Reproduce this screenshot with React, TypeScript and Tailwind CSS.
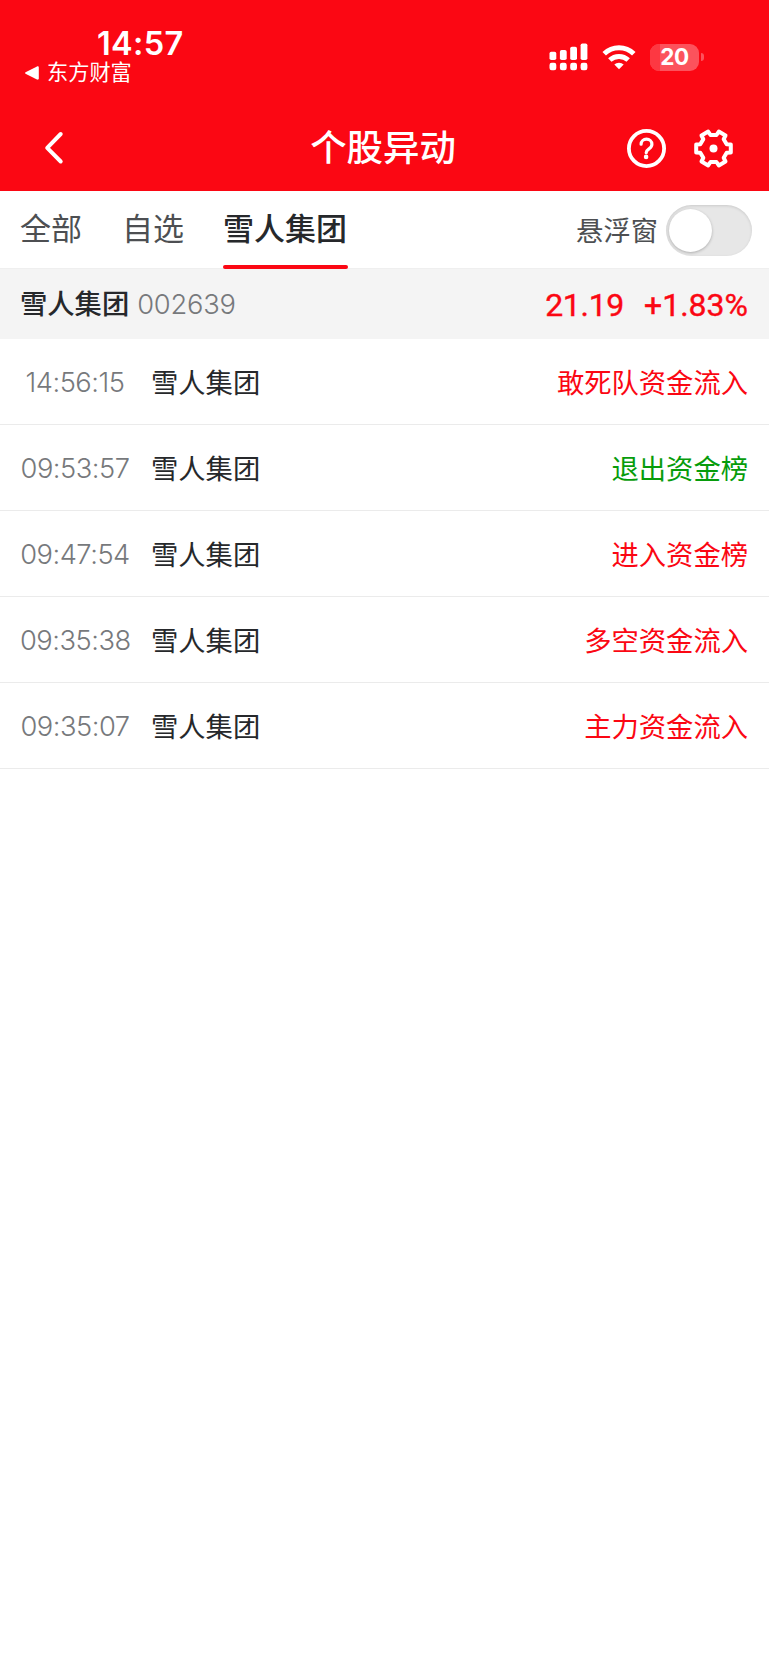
type Tone = "up" | "down";

type Movement = {
  time: string;
  name: string;
  event: string;
  tone: Tone;
};

const movements: Movement[] = [
  { time: "14:56:15", name: "雪人集团", event: "敢死队资金流入", tone: "up" },
  { time: "09:53:57", name: "雪人集团", event: "退出资金榜", tone: "down" },
  { time: "09:47:54", name: "雪人集团", event: "进入资金榜", tone: "up" },
  { time: "09:35:38", name: "雪人集团", event: "多空资金流入", tone: "up" },
  { time: "09:35:07", name: "雪人集团", event: "主力资金流入", tone: "up" },
];

const toneClass: Record<Tone, string> = {
  up: "text-[#fb0713]",
  down: "text-[#079c0b]",
};

export default function App() {
  return (
    <div className="flex min-h-[1665px] w-[769px] flex-col bg-white font-['Noto_Sans_CJK_SC',sans-serif]">
      <header className="h-[191px] bg-[#fb0713] text-white">
        <StatusBar />
        <NavBar />
      </header>
      <Tabs />
      <StockSummary />
      <ul>
        {movements.map((m) => (
          <MovementRow key={m.time} movement={m} />
        ))}
      </ul>
    </div>
  );
}

function StatusBar() {
  return (
    <div className="flex h-[106px] justify-between pt-[26px] pr-[65px] pl-[25px]">
      <div>
        <p className="pl-[72px] font-['Inter',sans-serif] text-[32.5px] leading-[35px] font-semibold tracking-[0.3px]">
          14:57
        </p>
        <div className="flex items-center">
          <svg width="14" height="14" viewBox="0 0 14 14" fill="currentColor">
            <path d="M1 5.9 12 .5c1-.4 1.8 0 1.8 1v11c0 1-.8 1.4-1.8 1L1 8.1C-.3 7.5-.3 6.5 1 5.9Z" />
          </svg>
          <span className="pb-[3px] pl-[8px] text-[21.2px] leading-[20px]">
            东方财富
          </span>
        </div>
      </div>
      <div className="flex h-[62px] items-center">
        <SignalIcon />
        <WifiIcon />
        <Battery level={20} />
      </div>
    </div>
  );
}

function NavBar() {
  return (
    <div className="grid h-[85px] grid-cols-[1fr_auto_1fr] items-center pb-px">
      <svg
        className="mb-px ml-[43px]"
        width="22"
        height="34"
        viewBox="0 0 22 34"
        fill="none"
        stroke="currentColor"
        strokeWidth="4"
        strokeLinecap="round"
        strokeLinejoin="round"
      >
        <path d="M17.7 3 4.2 16.8 17.7 30.5" />
      </svg>
      <h1 className="pr-[3px] pb-[6px] text-[36.4px] leading-[44px] font-medium">
        个股异动
      </h1>
      <div className="flex items-center justify-end gap-[26px] pr-[35px]">
        <HelpIcon />
        <GearIcon />
      </div>
    </div>
  );
}

function Tabs() {
  return (
    <nav className="flex h-[78px] items-stretch justify-between border-b border-[#efefef] pr-[17px] pl-[20px] text-[#4d4f52]">
      <div className="flex gap-[40px] text-[31px] leading-[72px]">
        <span>全部</span>
        <span>自选</span>
        <span className="relative -ml-px font-medium text-[#26282b]">
          雪人集团
          <i className="absolute -right-px bottom-[-1px] left-0 h-[4px] rounded-[2px] bg-[#fb0713]" />
        </span>
      </div>
      <label className="flex items-center gap-[8px] text-[27.3px]">
        悬浮窗
        <span className="mt-[2px] flex h-[51px] w-[86px] items-center rounded-full bg-[#e7e7e7] pl-[3px] shadow-[inset_0_1px_3px_rgba(0,0,0,0.12)]">
          <span className="size-[43px] rounded-full bg-white shadow-[0_1px_3px_rgba(0,0,0,0.25)]" />
        </span>
      </label>
    </nav>
  );
}

function StockSummary() {
  return (
    <section className="flex h-[70px] items-center justify-between bg-[#f4f4f4] pr-[21px] pl-[20px]">
      <div className="flex items-baseline gap-[8px] text-[27.3px]">
        <span className="font-medium text-[#26282b]">雪人集团</span>
        <span className="font-['Inter',sans-serif] font-[350] tracking-[-0.2px] text-[#77797c]">
          002639
        </span>
      </div>
      <div className="flex gap-[20px] pt-[2px] font-['Roboto',sans-serif] text-[32px] font-normal text-[#fb0713] [-webkit-text-stroke:0.4px_#fb0713]">
        <span className="tracking-[-0.3px]">21.19</span>
        <span>+1.83%</span>
      </div>
    </section>
  );
}

function MovementRow({ movement }: { movement: Movement }) {
  const { time, name, event, tone } = movement;
  return (
    <li className="flex h-[86px] items-center border-b border-[#ebebeb] pr-[21px] pl-[20px] text-[27.3px]">
      <span className="w-[110px] pt-[4px] text-center font-['Inter',sans-serif] font-[350] tracking-[-0.5px] text-[#77797c]">
        {time}
      </span>
      <span className="pl-[21px] text-[#26282b]">{name}</span>
      <span className={`ml-auto ${toneClass[tone]}`}>{event}</span>
    </li>
  );
}

function SignalIcon() {
  return (
    <svg width="39" height="28" viewBox="0 0 39 28" fill="currentColor">
      <rect x="0.5" y="8.8" width="6.8" height="8.2" rx="1.8" />
      <rect x="10.9" y="7" width="6.8" height="10" rx="1.8" />
      <rect x="21.2" y="3.7" width="6.8" height="13.3" rx="1.8" />
      <rect x="31.6" y="0.5" width="6.8" height="16.5" rx="1.8" />
      <rect x="0.5" y="19.7" width="6.8" height="7.6" rx="2.2" />
      <rect x="10.9" y="19.7" width="6.8" height="7.6" rx="2.2" />
      <rect x="21.2" y="19.7" width="6.8" height="7.6" rx="2.2" />
      <rect x="31.6" y="19.7" width="6.8" height="7.6" rx="2.2" />
    </svg>
  );
}

function WifiIcon() {
  return (
    <svg
      className="ml-[14px]"
      width="34"
      height="26"
      viewBox="0 0 34 26"
      fill="none"
      stroke="currentColor"
      strokeWidth="5"
    >
      <path d="M2.2 9.8a21.2 21.2 0 0 1 29.6 0" />
      <path d="M7.8 16a13.6 13.6 0 0 1 18.4 0" />
      <path
        d="M17 25.2 12.3 20.6a6.8 6.8 0 0 1 9.4 0Z"
        fill="currentColor"
        stroke="none"
      />
    </svg>
  );
}

function Battery({ level }: { level: number }) {
  return (
    <div className="ml-[14px] flex items-center gap-[2px]">
      <div className="relative flex h-[27px] w-[49px] items-center justify-center overflow-hidden rounded-[9px] bg-[#fc525c]">
        <i
          className="absolute inset-y-0 left-0 bg-[#fd3842]"
          style={{ width: `${level}%` }}
        />
        <span className="relative pt-px font-['Inter',sans-serif] text-[22.5px] leading-none font-bold tracking-[-0.3px]">
          {level}
        </span>
      </div>
      <i className="h-[8px] w-[3px] rounded-r-full bg-[#fc525c]" />
    </div>
  );
}

function HelpIcon() {
  return (
    <svg
      width="41"
      height="41"
      viewBox="0 0 41 41"
      fill="none"
      stroke="currentColor"
      strokeLinecap="round"
      strokeLinejoin="round"
    >
      <circle cx="20.5" cy="20.5" r="17.6" strokeWidth="3.8" />
      <path
        d="M15.1 16.2c0-3 2.4-5 5.4-5s5.4 2.1 5.4 5c0 2.2-1.2 3.4-2.8 4.6-1.7 1.2-2.9 2-2.9 3.9"
        strokeWidth="3.2"
      />
      <circle cx="20.1" cy="28.9" r="2.3" fill="currentColor" stroke="none" />
    </svg>
  );
}

function GearIcon() {
  return (
    <svg width="41" height="41" viewBox="-20.5 -20.5 41 41" fill="none">
      <path
        d="M17.3-3.9V3.9L13.2 4.15 10.2 9.35 12 13 5.3 16.9 3 13.5H-3L-5.3 16.9-12 13-10.2 9.35-13.2 4.15-17.3 3.9V-3.9L-13.2-4.15-10.2-9.35-12-13-5.3-16.9-3-13.5H3L5.3-16.9 12-13 10.2-9.35 13.2-4.15Z"
        stroke="currentColor"
        strokeWidth="4"
        strokeLinejoin="round"
      />
      <circle r="4" fill="currentColor" />
    </svg>
  );
}
